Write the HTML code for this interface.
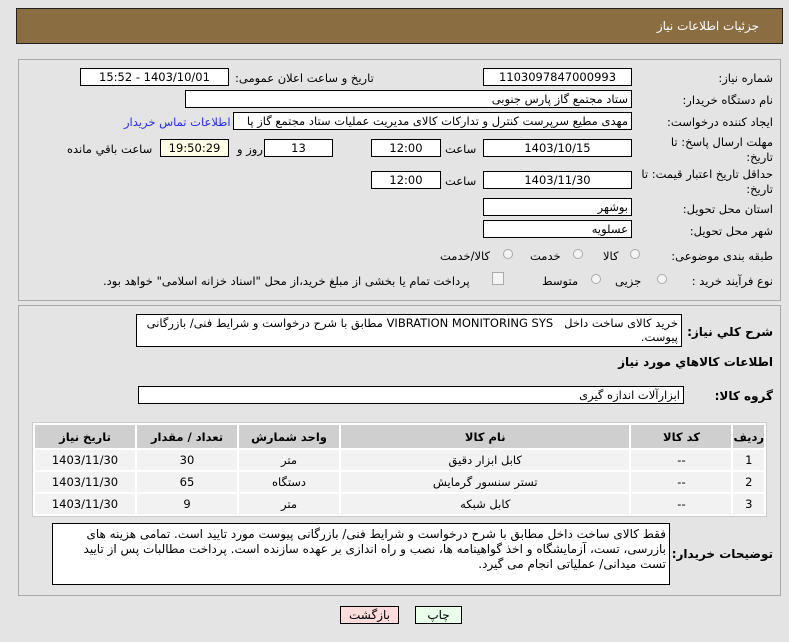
<!DOCTYPE html>
<html><head><meta charset="utf-8">
<style>
body{margin:0;width:789px;height:642px;background:#e4e4e4;font-family:"DejaVu Sans","Liberation Sans",sans-serif;font-size:11.5px;color:#000;position:relative;overflow:hidden}
.a{position:absolute;white-space:nowrap}
.box{position:absolute;background:#fff;border:1px solid #000;box-sizing:border-box;direction:rtl;padding:0 3px;line-height:17px;overflow:hidden;white-space:nowrap}
.c{text-align:center}
.l{position:absolute;direction:rtl;white-space:nowrap}
.panel{position:absolute;border:1px solid #a8a8a8;box-sizing:border-box;background:#e4e4e4}
.rad{position:absolute;width:10px;height:10px;border:1px solid #aaa;border-radius:50%;background:#f4f4f4;box-sizing:border-box}
table{position:absolute;border-collapse:separate;border-spacing:2px;background:#fff;direction:rtl;left:32px;top:422px;width:735px;border:1px solid #ccc}
td,th{text-align:center;padding:0;font-size:11.5px}
th{background:#cfcfcf;height:23px;font-weight:bold}
td{background:#f2f2f2;height:20px}
.btn{position:absolute;border:1px solid #000;box-sizing:border-box;text-align:center;line-height:16px;font-size:12px}
</style></head><body>
<div class="a" style="left:16px;top:8px;width:767px;height:36px;background:#8b6d42;border:1px solid #222;box-sizing:border-box"></div>
<div class="l" style="right:30px;top:19px;color:#fff;font-size:12px">جزئیات اطلاعات نیاز</div>

<div class="panel" style="left:18px;top:59px;width:763px;height:242px"></div>
<div class="panel" style="left:18px;top:305px;width:763px;height:291px"></div>

<div class="l" style="right:16px;top:71px">شماره نیاز:</div>
<div class="box c" style="left:483px;top:68px;width:149px;height:18px">1103097847000993</div>
<div class="l" style="left:235px;top:71px">تاریخ و ساعت اعلان عمومی:</div>
<div class="box c" style="left:80px;top:68px;width:149px;height:18px">1403/10/01 - 15:52</div>

<div class="l" style="right:16px;top:93px">نام دستگاه خریدار:</div>
<div class="box" style="left:185px;top:90px;width:447px;height:18px">ستاد مجتمع گاز پارس جنوبی</div>

<div class="l" style="right:16px;top:115px">ایجاد کننده درخواست:</div>
<div class="box" style="left:233px;top:112px;width:399px;height:18px">مهدی مطیع سرپرست کنترل و تدارکات کالای مدیریت عملیات ستاد مجتمع گاز پا</div>
<div class="l" style="left:124px;top:115px;color:#2a2aff">اطلاعات تماس خریدار</div>

<div class="l" style="right:16px;top:135px;line-height:15px">مهلت ارسال پاسخ: تا<br>تاریخ:</div>
<div class="box c" style="left:483px;top:139px;width:149px;height:18px">1403/10/15</div>
<div class="l" style="left:445px;top:142px">ساعت</div>
<div class="box c" style="left:371px;top:139px;width:70px;height:18px">12:00</div>
<div class="box c" style="left:264px;top:139px;width:69px;height:18px">13</div>
<div class="l" style="left:237px;top:142px">روز و</div>
<div class="box c" style="left:160px;top:139px;width:69px;height:18px;background:#ffffe6">19:50:29</div>
<div class="l" style="left:67px;top:142px">ساعت باقي مانده</div>

<div class="l" style="right:16px;top:167px;line-height:15px">حداقل تاریخ اعتبار قیمت: تا<br>تاریخ:</div>
<div class="box c" style="left:483px;top:171px;width:149px;height:18px">1403/11/30</div>
<div class="l" style="left:445px;top:174px">ساعت</div>
<div class="box c" style="left:371px;top:171px;width:70px;height:18px">12:00</div>

<div class="l" style="right:16px;top:202px">استان محل تحویل:</div>
<div class="box" style="left:483px;top:198px;width:149px;height:18px">بوشهر</div>
<div class="l" style="right:16px;top:224px">شهر محل تحویل:</div>
<div class="box" style="left:483px;top:220px;width:149px;height:18px">عسلویه</div>

<div class="l" style="right:16px;top:249px">طبقه بندی موضوعی:</div>
<div class="rad" style="left:630px;top:249px"></div><div class="l" style="left:603px;top:249px">کالا</div>
<div class="rad" style="left:573px;top:249px"></div><div class="l" style="left:530px;top:249px">خدمت</div>
<div class="rad" style="left:503px;top:249px"></div><div class="l" style="left:440px;top:249px">کالا/خدمت</div>

<div class="l" style="right:16px;top:274px">نوع فرآیند خرید :</div>
<div class="rad" style="left:657px;top:274px"></div><div class="l" style="left:615px;top:274px">جزیی</div>
<div class="rad" style="left:591px;top:274px"></div><div class="l" style="left:542px;top:274px">متوسط</div>
<div class="a" style="left:492px;top:272px;width:10px;height:11px;border:1px solid #aaa;background:#f4f4f4"></div>
<div class="l" style="left:103px;top:274px">پرداخت تمام یا بخشی از مبلغ خرید،از محل "اسناد خزانه اسلامی" خواهد بود.</div>

<div class="l" style="right:16px;top:325px;font-weight:bold;font-size:12px">شرح کلي نیاز:</div>
<div class="box" style="left:136px;top:314px;width:546px;height:33px;white-space:normal;line-height:14px;padding-top:1px">خرید کالای ساخت داخل &nbsp;&nbsp;VIBRATION MONITORING SYS مطابق با شرح درخواست و شرایط فنی/ بازرگانی پیوست.</div>
<div class="l" style="right:16px;top:355px;font-weight:bold;font-size:12px">اطلاعات کالاهاي مورد نیاز</div>
<div class="l" style="right:16px;top:389px;font-weight:bold;font-size:12px">گروه کالا:</div>
<div class="box" style="left:138px;top:386px;width:546px;height:18px">ابزارآلات اندازه گیری</div>

<table>
<tr><th style="width:30px">ردیف</th><th style="width:100px">کد کالا</th><th>نام کالا</th><th style="width:100px">واحد شمارش</th><th style="width:100px">تعداد / مقدار</th><th style="width:100px">تاریخ نیاز</th></tr>
<tr><td>1</td><td>--</td><td>کابل ابزار دقیق</td><td>متر</td><td>30</td><td>1403/11/30</td></tr>
<tr><td>2</td><td>--</td><td>تستر سنسور گرمایش</td><td>دستگاه</td><td>65</td><td>1403/11/30</td></tr>
<tr><td>3</td><td>--</td><td>کابل شبکه</td><td>متر</td><td>9</td><td>1403/11/30</td></tr>
</table>

<div class="l" style="right:16px;top:547px;font-weight:bold;font-size:12px">توضیحات خریدار:</div>
<div class="box" style="left:52px;top:523px;width:618px;height:62px;white-space:normal;line-height:15px;padding-top:3px;font-size:12px">فقط کالای ساخت داخل مطابق با شرح درخواست و شرایط فنی/ بازرگانی پیوست مورد تایید است. تمامی هزینه های بازرسی، تست، آزمایشگاه و اخذ گواهینامه ها، نصب و راه اندازی بر عهده سازنده است. پرداخت مطالبات پس از تایید تست میدانی/ عملیاتی انجام می گیرد.</div>

<div class="btn" style="left:340px;top:606px;width:59px;height:18px;background:#ffdcdc">بازگشت</div>
<div class="btn" style="left:415px;top:606px;width:47px;height:18px;background:#eaffea">چاپ</div>
</body></html>
